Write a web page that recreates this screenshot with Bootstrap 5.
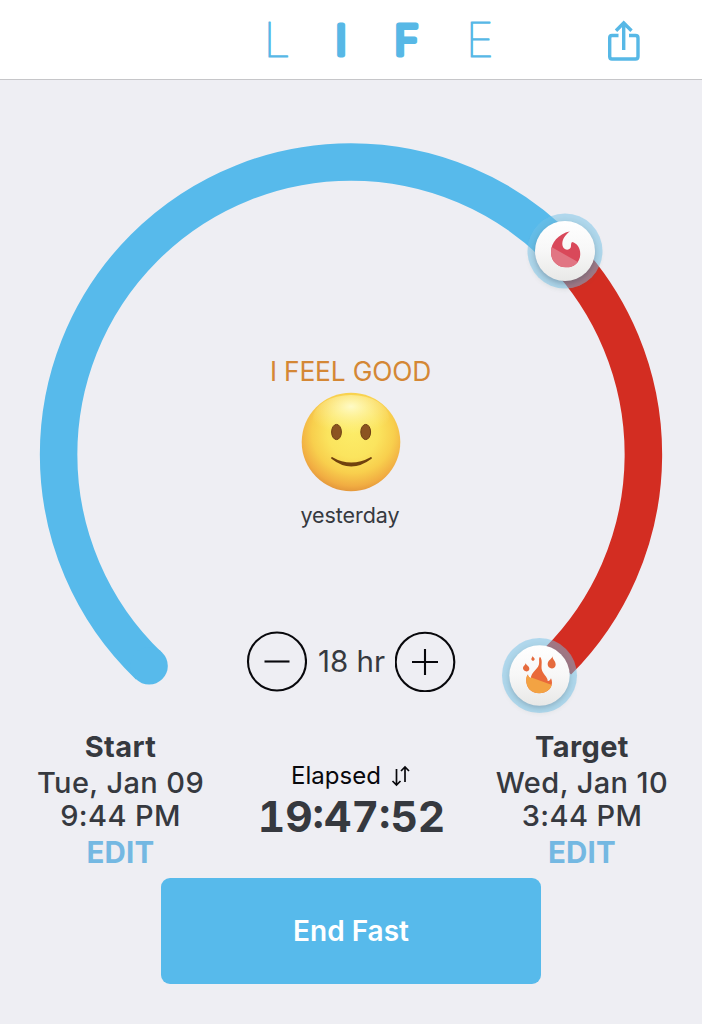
<!DOCTYPE html>
<html lang="en">
<head>
<meta charset="utf-8">
<meta name="viewport" content="width=device-width, initial-scale=1">
<title>LIFE Fasting</title>
<link href="https://cdn.jsdelivr.net/npm/bootstrap@5.3.0/dist/css/bootstrap.min.css" rel="stylesheet">
<style>
  body { background: #eeeef3; font-family: Inter, "Liberation Sans", sans-serif; color: #36393f; width: 702px; height: 1024px; overflow: hidden; }
  .topbar { height: 80px; border-bottom: 1px solid #c6c6c9; padding-left: 261px; padding-right: 61px; }
  .dial { display: grid; height: 640px; }
  .dial > * { grid-area: 1 / 1; }
  .dial-body { padding-top: 271px; }
  .mood { font-size: 26.4px; line-height: 40px; color: #d48735; letter-spacing: -.2px; padding-right: 1px; }
  .when { font-size: 21.5px; line-height: 30px; margin-top: 8px; padding-right: 2px; letter-spacing: -.05px; }
  .hours { height: 62px; margin-top: 100px; gap: 10px; }
  .hours-value { font-size: 29.5px; width: 68px; line-height: 36px; white-space: nowrap; padding-left: 1px; }
  .round-btn { width: 61px; height: 61px; }
  .times { padding-top: 10px; }
  .side { width: 241px; font-size: 29px; font-weight: 600; line-height: 33px; letter-spacing: .1px; }
  .side-date { font-weight: 550; letter-spacing: .4px; }
  .middle + .side { padding-left: 1px; }
  .side-title { font-size: 29px; font-weight: 700; line-height: 34px; margin-bottom: 2px; letter-spacing: .4px; }
  .edit { font-size: 29.5px; font-weight: 700; line-height: 40px; color: #74b8e2; letter-spacing: .2px; }
  .middle { width: 220px; padding-top: 30px; }
  .elapsed { font-size: 24px; line-height: 31px; color: #08080c; gap: 10px; }
  .timer { font-size: 42.5px; font-weight: 700; line-height: 52px; white-space: nowrap; font-variant-numeric: tabular-nums; padding-left: 1px; }
  .end-btn { width: 380px; height: 106px; margin-top: 6px; border-radius: 9px; background: #57baeb; color: #fff; font-size: 28px; font-weight: 600; }
</style>
</head>
<body>
<header class="topbar bg-white d-flex justify-content-between align-items-center">
  <svg width="240" height="78" viewBox="261 0 240 78" fill="#57b8e6" stroke="#57b8e6" stroke-linejoin="round" font-family="Inter" role="img">
    <text x="263.5" y="56.3" font-size="48" font-weight="100" stroke-width="1.1">L</text>
    <text x="335.7" y="53.5" font-size="40.5" font-weight="300" stroke-width="5.2">I</text>
    <text x="394.8" y="53.5" font-size="40.5" font-weight="300" stroke-width="5.2">F</text>
    <text x="465.7" y="56.3" font-size="48" font-weight="100" stroke-width="1.1">E</text>
  </svg>
  <svg width="36" height="78" viewBox="605 1 36 78" fill="none" stroke="#57b8e6" stroke-width="3.4">
    <path d="M618.5 35.5H612Q609.7 35.5 609.7 38V56.5Q609.7 59 612 59H635.500Q638 59 638 56.500V38Q638 35.500 635.500 35.500H629M623.700 50V23M616 30.700L623.700 23L631.500 30.700"/>
  </svg>
</header>
<main>
  <section class="dial">
    <svg width="702" height="640" viewBox="0 80 702 640">
      <defs>
        <linearGradient id="knob" x2="0" y2="1"><stop stop-color="#fff"/><stop offset=".5" stop-color="#f7f7f7"/><stop offset="1" stop-color="#e8e8e7"/></linearGradient>
        <clipPath id="drop"><path d="M180 109C166 119 156 134 157 148C158 161 169 168 178 162C187 156 180 148 186 141C201 144 212 160 211 179C209 203 191 218 167 217C141 216 123 197 123 172C123 143 144 118 180 109Z"/></clipPath>
        <clipPath id="blaze"><path d="M150 95C144 101 151 114 144 125C137 136 125 142 122 160C117 158 114 153 114 148C106 157 107 181 118 193C134 210 163 208 178 193C187 184 188 169 183 160C181 165 177 169 173 168C174 156 157 147 155 132C153 119 159 106 150 95Z"/></clipPath>
        <filter id="soft" x="-30%" y="-30%" width="160%" height="160%"><feGaussianBlur stdDeviation="2"/></filter>
      </defs>
      <g fill="none" stroke-width="37.500">
        <path d="M561.400 251.300A292.700 292.700 0 0 1 557.800 661.300" stroke="#d32d22"/>
        <path d="M148.900 666A292.500 292.500 0 0 1 58.600 454.500A292.500 292.500 0 0 1 351 162A292.500 292.500 0 0 1 561.400 251.300" stroke="#57baeb"/>
        <circle cx="149.100" cy="665.900" r="18.700" fill="#57baeb" stroke="none"/>
      </g>
      <g>
        <circle cx="565" cy="254" r="36" fill="#465" opacity=".1" filter="url(#soft)"/>
        <circle cx="565" cy="251" r="37.500" fill="#eeeef3" opacity=".15"/>
        <circle cx="565" cy="251" r="37.500" fill="#57b8e6" opacity=".4"/>
        <circle cx="565" cy="254" r="30" fill="#234" opacity=".22" filter="url(#soft)"/>
        <circle cx="565" cy="251" r="30" fill="url(#knob)"/>
        <g transform="translate(510 195) scale(.33333)" clip-path="url(#drop)">
          <rect x="110" y="100" width="110" height="125" fill="#d9485a"/>
          <path d="M110 148L220 210V225H110Z" fill="#e17583"/>
        </g>
      </g>
      <g>
        <circle cx="539.500" cy="678" r="36" fill="#465" opacity=".08" filter="url(#soft)"/>
        <circle cx="539.500" cy="675.500" r="37.500" fill="#eeeef3" opacity=".15"/>
        <circle cx="539.500" cy="675.500" r="37.500" fill="#57b8e6" opacity=".4"/>
        <circle cx="539.500" cy="678" r="30" fill="#234" opacity=".18" filter="url(#soft)"/>
        <circle cx="539.500" cy="675.500" r="30.200" fill="url(#knob)"/>
        <g transform="translate(490 625) scale(.33333)">
          <g clip-path="url(#blaze)">
            <rect x="100" y="90" width="95" height="120" fill="#e9693a"/>
            <path d="M100 142L122 157L195 183V215H100Z" fill="#f3a343"/>
          </g>
          <g fill="#e56a3d">
            <path d="M188 94C187 104 197 107 197 119C197 134 173 134 173 118C173 106 184 104 188 94Z"/>
            <path d="M107 113C107 120 118 122 118 131C118 142 100 142 99 130C99 121 107 121 107 113Z"/>
            <path d="M128 92C128 97 134 98 134 102C134 109 124 109 124 102C124 98 128 97 128 92Z"/>
          </g>
        </g>
      </g>
    </svg>
    <div class="dial-body d-flex flex-column align-items-center">
      <div class="mood">I FEEL GOOD</div>
      <svg width="100" height="101" viewBox="0 0 100 101">
        <defs>
          <radialGradient id="face" cx=".52" cy=".4" r=".64"><stop stop-color="#fcec68"/><stop offset=".4" stop-color="#fbe45e"/><stop offset=".65" stop-color="#f8cf4d"/><stop offset=".85" stop-color="#f1ad42"/><stop offset="1" stop-color="#dc8a37"/></radialGradient>
          <radialGradient id="gloss" cx=".5" cy=".25" r=".6"><stop stop-color="#fffdd2" stop-opacity=".9"/><stop offset="1" stop-color="#fff59c" stop-opacity="0"/></radialGradient>
        </defs>
        <circle cx="50" cy="51" r="49.300" fill="url(#face)"/>
        <ellipse cx="50" cy="27" rx="38" ry="23" fill="url(#gloss)"/>
        <g fill="#8c5421" stroke="#6d3e13"><ellipse cx="35.500" cy="41" rx="4.900" ry="7.600"/><ellipse cx="64.700" cy="41" rx="4.900" ry="7.600"/></g>
        <path d="M31 67Q50 82 70 67Q50 78 31 67Z" fill="#70410e" stroke="#70410e" stroke-width="1.800" stroke-linejoin="round"/>
      </svg>
      <div class="when">yesterday</div>
      <div class="hours d-flex align-items-center">
        <svg class="round-btn" viewBox="0 0 61 61" fill="none" stroke="#08080c" stroke-width="2.100"><circle cx="31" cy="30.500" r="29"/><path d="M18.500 30.500H43.500"/></svg>
        <div class="hours-value d-flex justify-content-center">18 hr</div>
        <svg class="round-btn" viewBox="0 0 61 61" fill="none" stroke="#08080c" stroke-width="2.100"><circle cx="30" cy="31" r="29.300"/><path d="M17 31H43M30 18V44"/></svg>
      </div>
    </div>
  </section>
  <section class="times d-flex text-center">
    <div class="side">
      <div class="side-title">Start</div>
      <div class="side-date">Tue, Jan 09</div>
      <div class="side-date">9:44 PM</div>
      <div class="edit">EDIT</div>
    </div>
    <div class="middle">
      <div class="elapsed d-flex justify-content-center align-items-center">Elapsed
        <svg width="20" height="22" viewBox="0 0 20 22" fill="none" stroke="#08080c" stroke-width="1.700"><path d="M5.500 4V20M1.500 16L5.500 20L9.500 16M14 17V2M10 6L14 2L18 6"/></svg>
      </div>
      <div class="timer">19:47:52</div>
    </div>
    <div class="side">
      <div class="side-title">Target</div>
      <div class="side-date">Wed, Jan 10</div>
      <div class="side-date">3:44 PM</div>
      <div class="edit">EDIT</div>
    </div>
  </section>
  <button class="end-btn btn d-block mx-auto border-0">End Fast</button>
</main>
<script src="https://cdn.jsdelivr.net/npm/bootstrap@5.3.0/dist/js/bootstrap.bundle.min.js"></script>
</body>
</html>
